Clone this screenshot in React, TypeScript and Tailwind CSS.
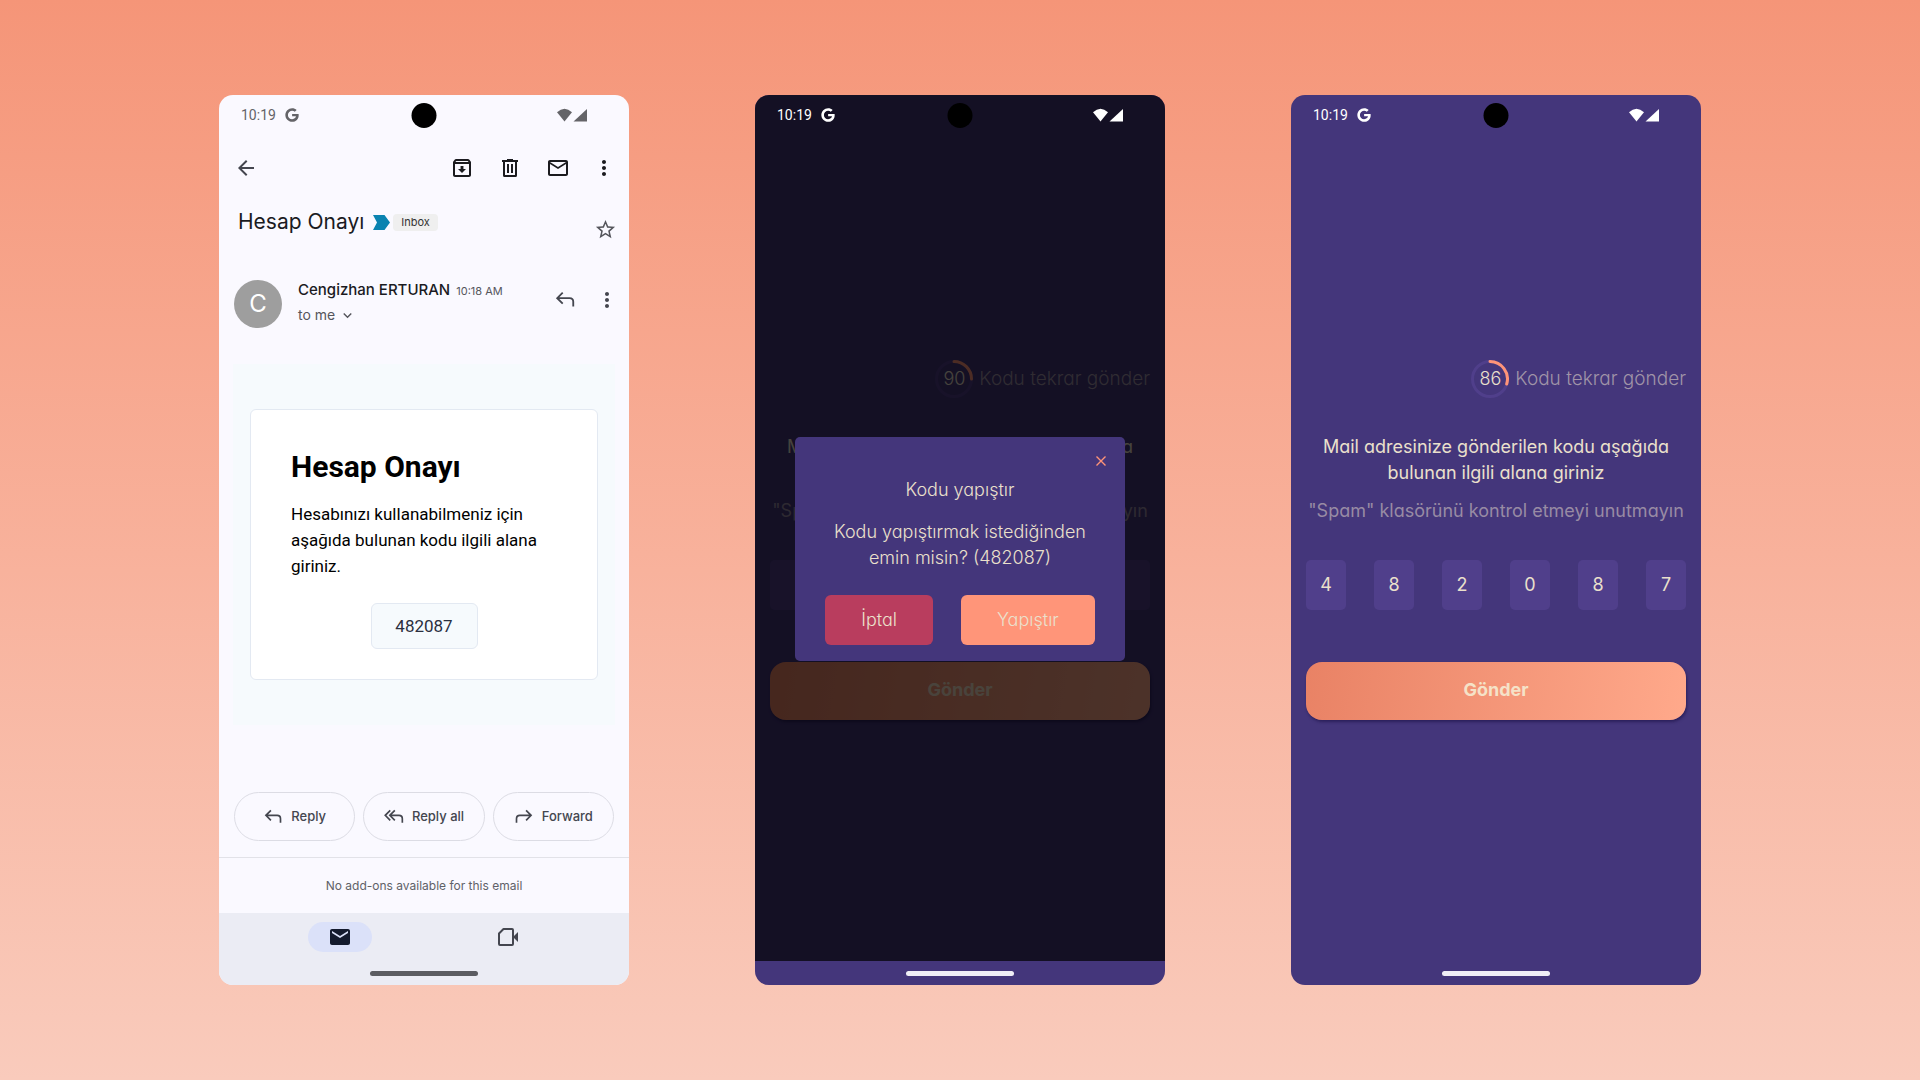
import type { ReactNode } from "react";
import { FaGoogle } from "react-icons/fa";
import {
  MdArrowBack,
  MdExpandMore,
  MdMail,
  MdMoreVert,
  MdOutlineArchive,
  MdOutlineMail,
  MdStarBorder,
} from "react-icons/md";

function TrashIcon() {
  return (
    <svg viewBox="0 0 24 24" className="size-6" fill="none" stroke="currentColor" strokeWidth="2" aria-hidden="true">
      <path d="M4 5h16M9 4h6M6 5v14.5q0 .5.5.5h11q.5 0 .5-.5V5M10 8v9M14 8v9" />
    </svg>
  );
}

function ReplyIcon({ className, mirrored = false }: { className: string; mirrored?: boolean }) {
  return (
    <svg viewBox="0 0 24 24" className={className} fill="none" stroke="currentColor" strokeWidth="2" aria-hidden="true">
      <g transform={mirrored ? "matrix(-1 0 0 1 24 0)" : undefined}>
        <path d="M9.5 4 3.5 10l6 6M3.500 10H17q4 0 4 4v5" />
      </g>
    </svg>
  );
}

function ReplyAllIcon({ className }: { className: string }) {
  return (
    <svg viewBox="0 0 24 24" className={className} fill="none" stroke="currentColor" strokeWidth="2" aria-hidden="true">
      <path d="M7.500 4 1.500 10l6 6M13 4 7 10l6 6M7 10H18q4 0 4 4v5" />
    </svg>
  );
}

function MeetIcon() {
  return (
    <svg viewBox="0 0 24 24" className="size-6" aria-hidden="true">
      <path
        d="M7.500 4H16q1 0 1 1v14q0 1-1 1H4q-1 0-1-1V8.500z"
        fill="none"
        stroke="currentColor"
        strokeWidth="2"
        strokeLinejoin="round"
      />
      <path d="M17 12l5-5v10z" fill="currentColor" />
    </svg>
  );
}

function StatusBar({ className }: { className: string }) {
  return (
    <div className={`relative z-20 flex h-10 items-center justify-between pr-[41px] pl-[22px] ${className}`}>
      <div className="flex items-center gap-[9px]">
        <span className="font-[Roboto,sans-serif] text-sm">10:19</span>
        <FaGoogle className="size-[14px]" />
      </div>
      <svg viewBox="0 0 31 14" className="h-[14px] w-[31px]" fill="currentColor" aria-hidden="true">
        <path d="M0 4.200Q7.500-2.800 15 4.200L7.500 13.500z" />
        <path d="M30 1v12.500H16.500z" />
      </svg>
      <div className="absolute top-2 left-1/2 size-[25px] -translate-x-1/2 rounded-full bg-black" />
    </div>
  );
}

function Phone({ className, label, children }: { className: string; label: string; children: ReactNode }) {
  return (
    <section
      aria-label={label}
      className={`relative flex min-h-[890px] w-[410px] flex-col overflow-hidden rounded-[14px] ${className}`}
    >
      {children}
    </section>
  );
}

function HomeBar({ className }: { className: string }) {
  return (
    <div className="flex h-6 items-center justify-center">
      <div className={`h-[5px] w-[108px] rounded-full ${className}`} />
    </div>
  );
}

function MailPhone() {
  return (
    <Phone label="Mail" className="bg-[#faf9ff] font-[Inter,sans-serif] text-[#1b1b1f]">
      <StatusBar className="text-[#646468]" />
      <div className="mt-px flex h-16 items-center pr-[3px] pl-[15px]">
        <button aria-label="Back" className="mr-auto text-[#44464f]">
          <MdArrowBack className="size-6" />
        </button>
        <button aria-label="Archive" className="flex size-12 items-center justify-center">
          <MdOutlineArchive className="size-6" />
        </button>
        <button aria-label="Delete" className="flex size-12 items-center justify-center">
          <TrashIcon />
        </button>
        <button aria-label="Mark unread" className="flex size-12 items-center justify-center">
          <MdOutlineMail className="size-6" />
        </button>
        <button aria-label="More" className="flex h-12 w-11 items-center justify-center">
          <MdMoreVert className="size-6" />
        </button>
      </div>

      <div className="flex items-start justify-between pt-2 pr-3 pl-[19px]">
        <div className="flex items-center">
          <h1 className="text-[21px] leading-7">Hesap Onayı</h1>
          <svg viewBox="0 0 17 15" className="ml-[9px] h-[15px] w-[17px]" fill="#0a83b0" aria-hidden="true">
            <path d="M0 0h11.500L17 7.500 11.500 15H0l4-7.500z" />
          </svg>
          <span className="ml-[3px] rounded bg-[#efefef] px-2 text-[11px] leading-[17px] text-[#333]">Inbox</span>
        </div>
        <button aria-label="Star" className="mt-[10px] text-[#55565c]">
          <MdStarBorder className="size-[23px]" />
        </button>
      </div>

      <div className="mt-[39px] flex px-[15px]">
        <div className="flex size-12 items-center justify-center rounded-full bg-[#9e9e9e] text-2xl text-white">C</div>
        <div className="ml-4">
          <div className="flex items-baseline gap-1.5 leading-5">
            <span className="text-[15px] font-medium">Cengizhan ERTURAN</span>
            <span className="text-[11px] text-[#55565c]">10:18 AM</span>
          </div>
          <button className="mt-1 flex items-center gap-1 text-[14px] leading-5 text-[#55565c]">
            to me
            <MdExpandMore className="size-[17px]" />
          </button>
        </div>
        <button aria-label="Reply" className="ml-auto h-10 text-[#44464f]">
          <ReplyIcon className="size-[22px]" />
        </button>
        <button aria-label="Message options" className="-mr-[5px] ml-[19px] h-10 text-[#44464f]">
          <MdMoreVert className="size-6" />
        </button>
      </div>

      <div className="mx-3.5 mt-9 bg-[#f6fafd] px-[17px] py-[45px] font-[Roboto,sans-serif] text-black">
        <article className="rounded-md border border-[#e3e9f2] bg-white px-10 pt-[39px] pb-[30px]">
          <h2 className="text-[30px] leading-9 font-bold">Hesap Onayı</h2>
          <p className="mt-4 text-[17px] leading-[26px]">
            Hesabınızı kullanabilmeniz için aşağıda bulunan kodu ilgili alana giriniz.
          </p>
          <p className="mx-auto mt-6 w-[107px] rounded-md border border-[#e3e9f2] bg-[#f6fafd] text-center text-[17px] leading-[44px] text-[#2b2f3f]">
            482087
          </p>
        </article>
      </div>

      <div className="mt-auto grid grid-cols-3 gap-2 px-[15px] pb-4 text-[13px] font-medium text-[#44464f]">
        <button className="flex h-[49px] items-center justify-center gap-2 rounded-full border border-[#dcdce4]">
          <ReplyIcon className="size-5" />
          Reply
        </button>
        <button className="flex h-[49px] items-center justify-center gap-2 rounded-full border border-[#dcdce4]">
          <ReplyAllIcon className="size-5" />
          Reply all
        </button>
        <button className="flex h-[49px] items-center justify-center gap-2 rounded-full border border-[#dcdce4]">
          <ReplyIcon className="size-5" mirrored />
          Forward
        </button>
      </div>
      <p className="border-t border-[#e2e2e8] text-center text-xs leading-[55px] text-[#606168]">
        No add-ons available for this email
      </p>
      <nav className="bg-[#ebecf4]">
        <div className="grid h-12 grid-cols-2 items-center justify-items-center px-[37px]">
          <button aria-label="Mail" className="flex h-[30px] w-16 items-center justify-center rounded-full bg-[#dbe1f9] text-[#141b2e]">
            <MdMail className="size-6" />
          </button>
          <button aria-label="Meet" className="text-[#44464f]">
            <MeetIcon />
          </button>
        </div>
        <HomeBar className="bg-[#5b5c61]" />
      </nav>
    </Phone>
  );
}

function CountdownRing({ seconds, arc }: { seconds: string; arc: string }) {
  return (
    <div className="relative flex size-[38px] items-center justify-center">
      <svg viewBox="0 0 38 38" className="absolute inset-0" fill="none" strokeWidth="3" aria-hidden="true">
        <circle cx="19" cy="19" r="17.500" stroke="#503f8b" />
        <path d={arc} stroke="#ff9478" strokeLinecap="round" />
      </svg>
      <span className="relative text-lg font-light text-[#ebe0cc]">{seconds}</span>
    </div>
  );
}

function CodeForm({ code, seconds, arc, id }: { code: string[]; seconds: string; arc: string; id: string }) {
  return (
    <form
      className="flex flex-1 flex-col justify-center px-[15px] pb-4 text-center text-lg leading-[26px]"
      onSubmit={(e) => e.preventDefault()}
    >
      <div className="flex items-center justify-end gap-1.5">
        <CountdownRing seconds={seconds} arc={arc} />
        <button type="button" className="text-[19px] font-light text-[#a094a8]">
          Kodu tekrar gönder
        </button>
      </div>
      <p className="mt-9 text-[#ebe0cc]">
        Mail adresinize gönderilen kodu aşağıda
        <br />
        bulunan ilgili alana giriniz
      </p>
      <p className="mt-3 whitespace-nowrap text-[#988ba4]">"Spam" klasörünü kontrol etmeyi unutmayın</p>
      <div className="mt-9 flex justify-between">
        {code.map((digit, i) => (
          <input
            key={i}
            id={`${id}-${i}`}
            aria-label={`Kod hanesi ${i + 1}`}
            defaultValue={digit}
            maxLength={1}
            inputMode="numeric"
            className="h-[50px] w-10 rounded-[5px] bg-[#503f8b] pb-0.5 text-center text-[#ebe0cc] outline-none"
          />
        ))}
      </div>
      <button
        type="submit"
        className="mt-[52px] h-[58px] rounded-2xl bg-linear-[100deg] from-[#e98265] to-[#ffa98b] pb-0.5 font-bold text-[#f5e2c8] shadow-[1px_2px_3px_rgba(20,10,60,0.5)]"
      >
        Gönder
      </button>
    </form>
  );
}

const APP = "bg-[#44367b] font-[Inter,sans-serif] [font-feature-settings:'cv11']";

function PasteDialog() {
  return (
    <div className="absolute inset-x-0 top-0 bottom-6 z-10 flex items-center justify-center bg-black/70 px-10 pt-[41px]">
      <div
        role="dialog"
        aria-labelledby="paste-title"
        className="flex w-full flex-col rounded-[5px] bg-[#44367b] pt-3 pb-4 text-center text-lg leading-[26px] font-light text-[#ebe0cc]"
      >
        <button aria-label="Kapat" className="mr-3 flex size-6 items-center justify-center self-end">
          <svg viewBox="0 0 10 10" className="size-2.5" stroke="#ff9478" strokeWidth="1.400" aria-hidden="true">
            <path d="M.5.5l9 9M9.500.5l-9 9" />
          </svg>
        </button>
        <h2 id="paste-title" className="mt-1">
          Kodu yapıştır
        </h2>
        <p className="mt-4">
          Kodu yapıştırmak istediğinden
          <br />
          emin misin? (482087)
        </p>
        <div className="mt-6 flex justify-center gap-7">
          <button className="h-[50px] rounded-md bg-[#b93d5e] px-9">İptal</button>
          <button className="h-[50px] rounded-md bg-[#ff9579] px-9">Yapıştır</button>
        </div>
      </div>
    </div>
  );
}

export default function App() {
  return (
    <main className="flex min-h-screen flex-wrap items-center justify-center gap-[126px] bg-linear-to-b from-[#f59578] to-[#f9cbbc]">
      <MailPhone />
      <Phone label="Kodu yapıştır" className={APP}>
        <StatusBar className="text-white" />
        <CodeForm id="paste" code={["", "", "", "", "", ""]} seconds="90" arc="M19 1.500A17.500 17.500 0 0 1 36.500 19" />
        <PasteDialog />
        <HomeBar className="bg-[#f0eef6]" />
      </Phone>
      <Phone label="Kod onayı" className={APP}>
        <StatusBar className="text-white" />
        <CodeForm
          id="code"
          code={["4", "8", "2", "0", "8", "7"]}
          seconds="86"
          arc="M19 1.500A17.500 17.500 0 0 1 35.700 24"
        />
        <HomeBar className="bg-[#f0eef6]" />
      </Phone>
    </main>
  );
}
